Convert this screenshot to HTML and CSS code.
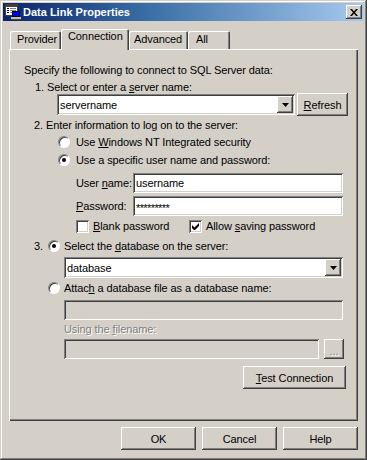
FILE: index.html
```html
<!DOCTYPE html>
<html>
<head>
<meta charset="utf-8">
<link rel="stylesheet" href="styles.css">
</head>
<body>
<div class="window">
  <div class="titlebar">
    <svg class="appicon" width="16" height="16" viewBox="0 0 16 16">
      <rect x="0.5" y="0.5" width="12" height="11" fill="#fff" stroke="#404040"/>
      <rect x="1" y="1" width="11" height="2" fill="#404040"/>
      <rect x="2" y="4" width="2" height="1" fill="#000080"/>
      <rect x="5" y="4" width="6" height="1" fill="#808080"/>
      <rect x="2" y="6" width="2" height="1" fill="#000080"/>
      <rect x="5" y="6" width="6" height="1" fill="#808080"/>
      <rect x="2" y="8" width="2" height="1" fill="#000080"/>
      <rect x="5" y="8" width="3" height="1" fill="#808080"/>
      <rect x="7.5" y="7.5" width="7" height="5" fill="#0000ff" stroke="#000"/>
      <rect x="6" y="13" width="10" height="2" fill="#c0c0c0" stroke="none"/>
      <rect x="6" y="15" width="10" height="1" fill="#404040"/>
    </svg>
    <span class="title">Data Link Properties</span>
    <div class="closebtn raised">
      <svg width="8" height="7" viewBox="0 0 8 7"><path d="M0 0h2l2 2.5L6 0h2L5 3.5 8 7H6L4 4.5 2 7H0l3-3.5z" fill="#000"/></svg>
    </div>
  </div>
  <div class="dlgbody">
    <div class="tabs">
      <div class="tab t-provider">Provider</div>
      <div class="tab t-conn selected">Connection</div>
      <div class="tab t-adv">Advanced</div>
      <div class="tab t-all">All</div>
    </div>
    <div class="panel">
      <div class="row r1"><span class="txt">Specify the following to connect to SQL Server data:</span></div>
      <div class="row r2"><span class="txt">1. Select or enter a <u>s</u>erver name:</span></div>
      <div class="row r3">
        <div class="combo sunken combo-server">
          <span class="val">servername</span>
          <div class="arrow raised"><svg width="7" height="4" viewBox="0 0 7 4"><path d="M0 0h7L3.5 4z" fill="#000"/></svg></div>
        </div>
        <div class="btn raised btn-refresh"><span><u>R</u>efresh</span></div>
      </div>
      <div class="row r4"><span class="txt">2. Enter information to log on to the server:</span></div>
      <div class="row r5">
        <span class="radio"></span><span class="txt">Use <u>W</u>indows NT Integrated security</span>
      </div>
      <div class="row r6">
        <span class="radio on"></span><span class="txt">Use a specific user name and password:</span>
      </div>
      <div class="row r7">
        <span class="lbl txt">User <u>n</u>ame:</span>
        <div class="edit sunken edit-user"><span class="val">username</span></div>
      </div>
      <div class="row r8">
        <span class="lbl txt"><u>P</u>assword:</span>
        <div class="edit sunken edit-user"><span class="val pw">*********</span></div>
      </div>
      <div class="row r9">
        <div class="chkitem first"><span class="check"></span><span class="txt"><u>B</u>lank password</span></div>
        <div class="chkitem"><span class="check on"><svg width="7" height="7" viewBox="0 0 7 7"><path d="M0 2v3l2 2h1l4-4V0L2.5 4.5z" fill="#000"/></svg></span><span class="txt">Allow <u>s</u>aving password</span></div>
      </div>
      <div class="row r10">
        <span class="num txt">3.</span><span class="radio on"></span><span class="txt">Select the <u>d</u>atabase on the server:</span>
      </div>
      <div class="row r11">
        <div class="combo sunken combo-db">
          <span class="val">database</span>
          <div class="arrow raised"><svg width="7" height="4" viewBox="0 0 7 4"><path d="M0 0h7L3.5 4z" fill="#000"/></svg></div>
        </div>
      </div>
      <div class="row r12">
        <span class="radio"></span><span class="txt">Attac<u>h</u> a database file as a database name:</span>
      </div>
      <div class="row r13">
        <div class="edit sunken disabled edit-wide"></div>
      </div>
      <div class="row r14"><span class="txt dis">Using the <u>f</u>ilename:</span></div>
      <div class="row r15">
        <div class="edit sunken disabled edit-file"></div>
        <div class="btn raised btn-browse dis">...</div>
      </div>
      <div class="row r16">
        <div class="btn raised btn-test"><span><u>T</u>est Connection</span></div>
      </div>
    </div>
    <div class="buttons">
      <div class="btn raised btn-dlg">OK</div>
      <div class="btn raised btn-dlg">Cancel</div>
      <div class="btn raised btn-dlg">Help</div>
    </div>
  </div>
</div>
</body>
</html>
```

FILE: styles.css
```css
* { box-sizing: border-box; }
html, body { margin: 0; padding: 0; background: #d4d0c8; }
body {
  font-family: "Liberation Sans", Arial, sans-serif;
  font-size: 11px;
  letter-spacing: -0.1px;
  color: #000;
}
u { text-decoration: underline; text-underline-offset: 1px; }

.window {
  width: 367px;
  height: 460px;
  background: #d4d0c8;
  padding: 3px;
  box-shadow: inset -1px -1px #404040, inset 1px 1px #d4d0c8, inset -2px -2px #808080, inset 2px 2px #fff;
}

.raised {
  background: #d4d0c8;
  box-shadow: inset -1px -1px #404040, inset 1px 1px #fff, inset -2px -2px #808080, inset 2px 2px #d4d0c8;
}
.sunken {
  background: #fff;
  box-shadow: inset 1px 1px #808080, inset -1px -1px #fff, inset 2px 2px #404040, inset -2px -2px #d4d0c8;
}
.sunken.disabled { background: #d4d0c8; }

.titlebar {
  height: 18px;
  display: flex;
  align-items: center;
  background: linear-gradient(to right, #0a246a 0%, #3a6ea5 40%, #a6caf0 100%);
  padding-left: 2px;
}
.appicon { display: block; flex: none; }
.title {
  color: #fff;
  font-weight: bold;
  font-size: 11px;
  letter-spacing: 0;
  margin-left: 2px;
  flex: 1;
  white-space: nowrap;
}
.closebtn {
  width: 16px;
  height: 14px;
  margin-right: 2px;
  display: flex;
  align-items: center;
  justify-content: center;
}
.closebtn svg { display: block; }

.dlgbody {
  padding: 8px 6px 0 6px;
}
.tabs {
  height: 20px;
  display: flex;
  align-items: flex-end;
  padding-left: 1px;
  position: relative;
  z-index: 1;
}
.tab {
  height: 18px;
  padding-top: 2px;
  padding-left: 7px;
  white-space: nowrap;
  background: #d4d0c8;
  border-radius: 2px 2px 0 0;
  box-shadow: inset 1px 1px #fff, inset -1px 0 #404040, inset -2px 0 #808080;
}
.t-provider { width: 51px; }
.t-conn { width: 68px; }
.t-adv { width: 59px; padding-left: 5px; }
.t-all { width: 42px; padding-left: 8px; }
.tab.selected {
  height: 21px;
  margin-bottom: -1px;
  padding-top: 1px;
}

.panel {
  width: 349px;
  height: 372px;
  padding-top: 15px;
  box-shadow: inset 1px 1px #fff, inset -1px -1px #404040, inset -2px -2px #808080;
}

.row {
  display: flex;
  align-items: center;
  white-space: nowrap;
}
.txt { line-height: 13px; }
.dis { color: #808080; text-shadow: 1px 1px #fff; }

.r1 { height: 13px; padding-left: 15px; }
.r2 { height: 12px; margin-top: 4px; padding-left: 26px; }
.r3 { height: 23px; margin-top: 0; padding-left: 48px; }
.r4 { height: 13px; margin-top: 3px; padding-left: 25px; }
.r5 { height: 14px; margin-top: 3px; padding-left: 49px; }
.r6 { height: 14px; margin-top: 4px; padding-left: 49px; }
.r7 { height: 20px; margin-top: 6px; padding-left: 67px; }
.r8 { height: 20px; margin-top: 3px; padding-left: 67px; }
.r9 { height: 14px; margin-top: 3px; padding-left: 67px; }
.r10 { height: 14px; margin-top: 6px; padding-left: 25px; }
.r11 { height: 21px; margin-top: 4px; padding-left: 55px; }
.r12 { height: 14px; margin-top: 3px; padding-left: 39px; }
.r13 { height: 20px; margin-top: 5px; padding-left: 55px; }
.r14 { height: 13px; margin-top: 3px; padding-left: 55px; }
.r15 { height: 20px; margin-top: 3px; padding-left: 55px; }
.r16 { height: 23px; margin-top: 7px; padding-left: 234px; }

.r5 .radio, .r6 .radio { margin-right: 6px; }
.r10 .radio, .r12 .radio { margin-right: 4px; }
.num { width: 14px; }

.combo {
  height: 21px;
  display: flex;
  align-items: center;
  padding: 2px;
}
.combo .val { flex: 1; padding-left: 1px; }
.combo .arrow {
  width: 16px;
  height: 17px;
  display: flex;
  align-items: center;
  justify-content: center;
}
.combo .arrow svg { display: block; margin-top: 1px; }
.combo-server { width: 238px; }
.combo-db { width: 279px; }

.btn {
  height: 23px;
  display: flex;
  align-items: center;
  justify-content: center;
  white-space: nowrap;
}
.btn-refresh { width: 51px; margin-left: 2px; }
.btn-test { width: 103px; }
.btn-browse { width: 20px; height: 20px; margin-left: 5px; padding-top: 4px; }
.btn-dlg { width: 75px; }

.edit {
  height: 20px;
  display: flex;
  align-items: center;
  padding: 2px 2px 2px 3px;
}
.edit-user { width: 210px; }
.edit-wide { width: 279px; }
.edit-file { width: 255px; }
.lbl { width: 57px; }
.pw { font-size: 11px; letter-spacing: -0.6px; padding-top: 3px; }

.radio {
  width: 12px;
  height: 12px;
  border-radius: 50%;
  background: #fff;
  border: 1px solid;
  border-color: #808080 #fff #fff #808080;
  box-shadow: inset 1px 1px #404040;
  position: relative;
  flex: none;
}
.radio.on::after {
  content: "";
  position: absolute;
  left: 3px;
  top: 3px;
  width: 4px;
  height: 4px;
  border-radius: 50%;
  background: #000;
}

.chkitem { display: flex; align-items: center; }
.chkitem.first { width: 113px; }
.check {
  width: 13px;
  height: 13px;
  background: #fff;
  flex: none;
  margin-right: 4px;
  box-shadow: inset 1px 1px #808080, inset -1px -1px #fff, inset 2px 2px #404040, inset -2px -2px #d4d0c8;
  display: flex;
  align-items: center;
  justify-content: center;
}
.check svg { display: block; }

.buttons {
  display: flex;
  justify-content: flex-end;
  gap: 6px;
  margin-top: 6px;
}
```
